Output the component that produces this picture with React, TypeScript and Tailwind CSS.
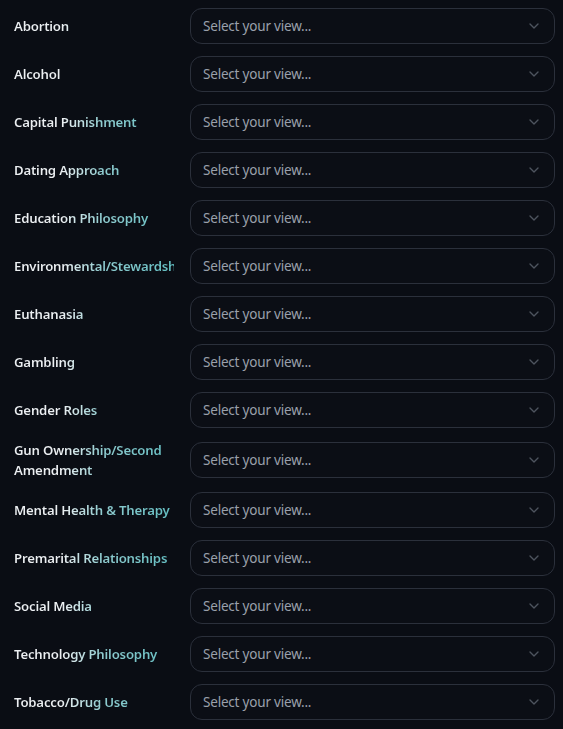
import React from "react";
import { ChevronDown } from "lucide-react";

const topics = [
  "Abortion",
  "Alcohol",
  "Capital Punishment",
  "Dating Approach",
  "Education Philosophy",
  "Environmental/Stewardship",
  "Euthanasia",
  "Gambling",
  "Gender Roles",
  "Gun Ownership/Second Amendment",
  "Mental Health & Therapy",
  "Premarital Relationships",
  "Social Media",
  "Technology Philosophy",
  "Tobacco/Drug Use",
];

function ViewRow({ topic }: { topic: string }) {
  return (
    <div className="flex items-center gap-4">
      <label className="w-40 shrink-0 overflow-hidden bg-gradient-to-r from-[#eceff2] from-30% via-[#8fcbcf] via-55% to-[#62bec2] bg-clip-text text-[13.2px] leading-5 font-semibold tracking-[-0.2px] text-transparent">
        {topic}
      </label>
      <button
        type="button"
        className="flex h-9 flex-1 items-center justify-between rounded-xl border border-[#2b303b] bg-[#0b0e15] pl-3 pr-3 text-left text-[13.5px] tracking-[-0.2px] text-[#9aa0ab]"
      >
        <span>Select your view...</span>
        <ChevronDown className="h-4 w-4 text-[#4e545e]" strokeWidth={2} />
      </button>
    </div>
  );
}

export default function App() {
  return (
    <div
      className="min-h-screen bg-[#0a0d14] pt-2 pb-3 pl-3.5 pr-2"
      style={{ fontFamily: '"Noto Sans", "Open Sans", sans-serif' }}
    >
      <div className="flex flex-col gap-3">
        {topics.map((t) => (
          <ViewRow key={t} topic={t} />
        ))}
      </div>
    </div>
  );
}
